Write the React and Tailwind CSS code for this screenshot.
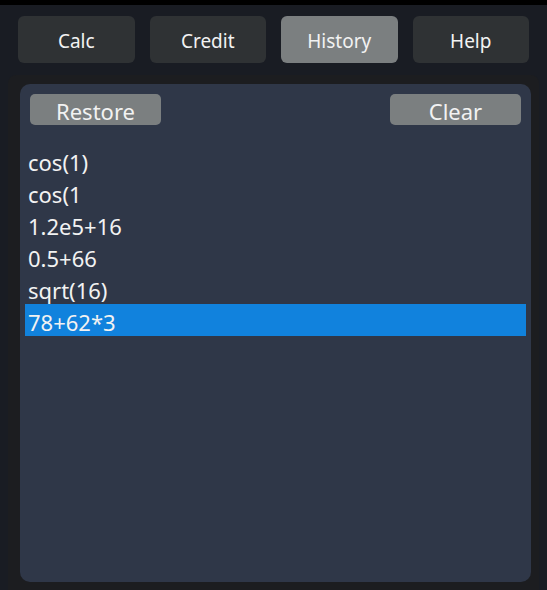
import React, { useState } from 'react';

const tabs = ['Calc', 'Credit', 'History', 'Help'];

const history = ['cos(1)', 'cos(1', '1.2e5+16', '0.5+66', 'sqrt(16)', '78+62*3'];

export default function App() {
  const [active, setActive] = useState('History');
  const [selected, setSelected] = useState(5);

  return (
    <div
      className="h-[590px] w-[547px] flex flex-col overflow-hidden bg-[#191c23] text-[#f2f2f2]"
      style={{ fontFamily: '"Noto Sans", "Open Sans", sans-serif' }}
    >
      <div className="h-[5px] bg-black" />

      {/* tab bar */}
      <div className="grid grid-cols-4 gap-[15px] px-[18px] pt-[11px]">
        {tabs.map((t) => (
          <button
            key={t}
            onClick={() => setActive(t)}
            className={
              'h-[47px] pt-[4px] rounded-[6px] text-[19px] leading-none ' +
              (t === active ? 'bg-[#7b7f80]' : 'bg-[#2f3234]')
            }
          >
            {t}
          </button>
        ))}
      </div>

      {/* history panel */}
      <div className="flex-1 flex flex-col mt-[12px] ml-[8px] mr-[8px] pt-[9px] pl-[12px] pr-[8px] pb-[8px] rounded-t-[8px] bg-[#1c1d20]">
        <div className="flex-1 flex flex-col rounded-[10px] bg-[#2f3748] pt-[10px]">
          <div className="flex justify-between px-[10px]">
            <button className="w-[131px] h-[31px] pt-[3px] rounded-[5px] bg-[#7b7f80] text-[22px] leading-none">
              Restore
            </button>
            <button className="w-[131px] h-[31px] pt-[3px] rounded-[5px] bg-[#7b7f80] text-[22px] leading-none">
              Clear
            </button>
          </div>

          <ul className="mt-[19px] px-[5px]">
            {history.map((h, i) => (
              <li
                key={i}
                onClick={() => setSelected(i)}
                className={
                  'h-[32px] flex items-center pt-[4px] pl-[3px] text-[22px] leading-none ' +
                  (i === selected ? 'bg-[#1182dd]' : '')
                }
              >
                {h}
              </li>
            ))}
          </ul>
        </div>
      </div>
    </div>
  );
}
